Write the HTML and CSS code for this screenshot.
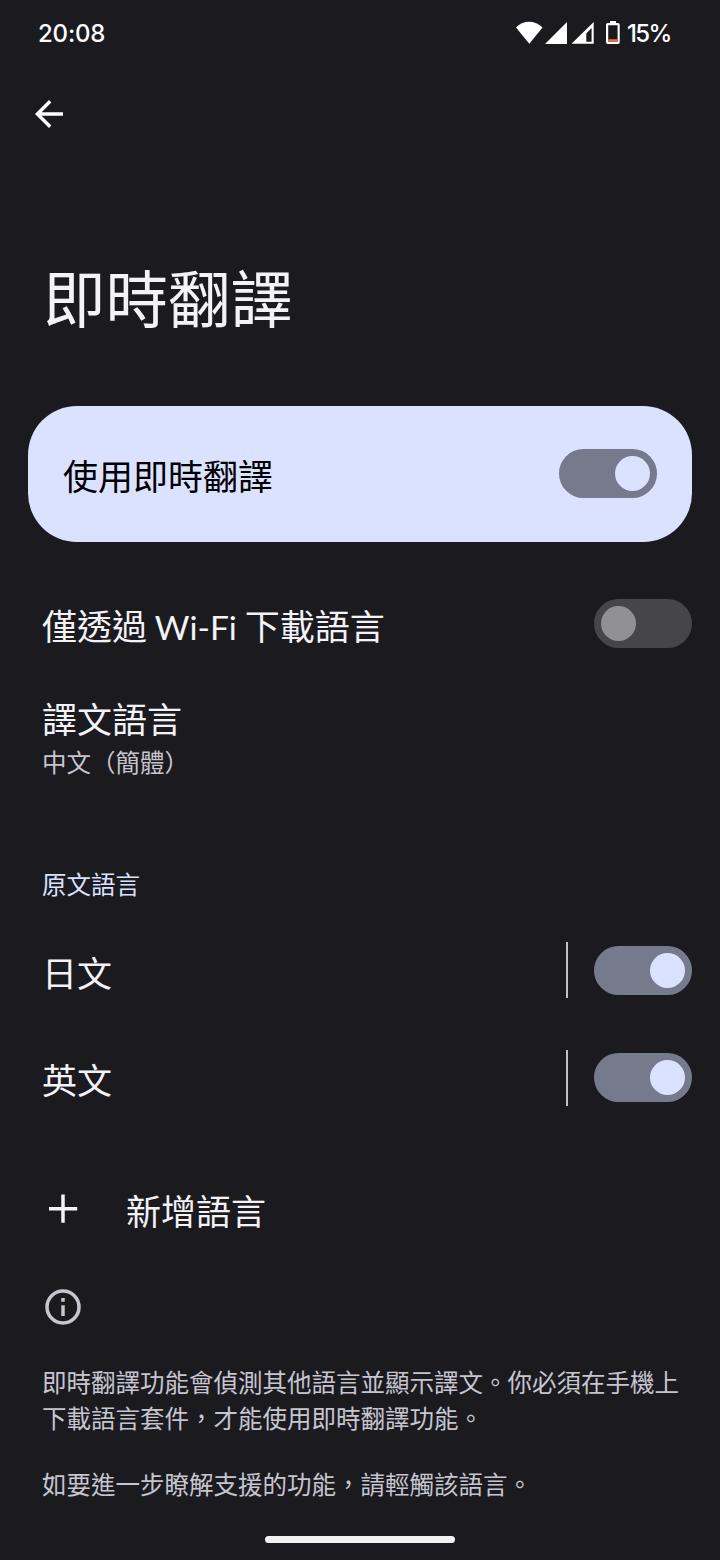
FILE: index.html
```html
<!DOCTYPE html>
<html lang="zh-Hant">
<head>
<meta charset="utf-8">
<title>即時翻譯</title>
<link rel="stylesheet" href="styles.css">
</head>
<body>
<div class="screen">
  <header class="status">
    <span class="clock">20:08</span>
    <div class="status-icons">
      <svg class="signals" width="106" height="28" viewBox="0 0 106 28">
        <path fill="#fff" d="M1 8.500C8 .8 20 .8 27.500 8.500L14.300 24.800Z"/>
        <path fill="#fff" d="M52 3V25H30Z"/>
        <path fill="#fff" fill-rule="evenodd" d="M78.700 3V24.800H56.500ZM76.600 9L71.300 14.500V22.700H76.600Z"/>
        <path fill="#fff" fill-rule="evenodd" d="M95 2h6v2h2q1.700 0 1.700 1.700v17.600q0 1.700-1.700 1.700H92.700q-1.700 0-1.700-1.700V5.700q0-1.700 1.700-1.700h2.300ZM93.200 6.300V22.800H102.600V6.300Z"/>
        <path fill="#f26a3d" d="M93.200 20.200h9.400v2.600h-9.400z"/>
      </svg>
      <span class="percent">15%</span>
    </div>
  </header>
  <nav class="appbar">
    <svg width="30" height="30" viewBox="0 0 30 30" fill="none" stroke="#fff" stroke-width="3.400"><path d="M29 15H4M16.200 2.200L3.400 15L16.200 27.800"/></svg>
  </nav>
  <h1 class="title">即時翻譯</h1>
  <section class="main-switch"><span>使用即時翻譯</span><i class="switch on"></i></section>
  <section class="row wifi"><span>僅透過 <span class="latin">Wi-Fi</span> 下載語言</span><i class="switch"></i></section>
  <section class="target"><div class="label">譯文語言</div><div class="summary">中文（簡體<span class="close">）</span></div></section>
  <h2 class="category">原文語言</h2>
  <section class="row language"><span>日文</span><i class="divider"></i><i class="switch on"></i></section>
  <section class="row language"><span>英文</span><i class="divider"></i><i class="switch on"></i></section>
  <section class="add">
    <svg width="42" height="42" viewBox="0 0 42 42" stroke="#f3f2f7" stroke-width="3.500"><path d="M21 5.500V33.700M7 19.700H35.200"/></svg>
    <span>新增語言</span>
  </section>
  <footer class="info">
    <svg width="42" height="42" viewBox="0 0 42 42" fill="none" stroke="#c6c5d0" stroke-width="3.500"><circle cx="21" cy="21" r="16"/><path d="M21 19.200V30M21 12V15.700"/></svg>
    <p>即時翻譯功能會偵測其他語言並顯示譯文。你必須在手機上<br>下載語言套件，才能使用即時翻譯功能。</p>
    <p>如要進一步瞭解支援的功能，請輕觸該語言。</p>
  </footer>
  <div class="home"></div>
</div>
</body>
</html>
```
FILE: styles.css
```css
* { box-sizing: border-box; }
body { margin: 0; background: #1b1b1f; }
.screen {
  width: 720px; height: 1560px; overflow: hidden;
  display: flex; flex-direction: column;
  background: #1b1b1f; color: #f3f2f7;
  font-family: "Noto Sans CJK TC", sans-serif;
  font-size: 35px; line-height: 50px;
}
.status { height: 66px; padding: 0 49px 0 38px; display: flex; align-items: center; justify-content: space-between; color: #fff; font: 500 24px/28px Inter, sans-serif; }
.clock { letter-spacing: -0.2px; padding-top: 1px; }
.status-icons { display: flex; align-items: center; gap: 6px; }
.percent { width: 44px; padding-top: 1px; letter-spacing: -1.600px; white-space: nowrap; }
.signals, svg { display: block; flex: none; }
.appbar { height: 96px; padding: 33px 0 0 34px; }
.title { margin: 88px 0 0 43px; height: 92px; font-size: 62.500px; line-height: 92px; font-weight: 400; }
.main-switch { margin: 64px 28px 0; height: 136px; padding: 0 35px; border-radius: 49px; background: #dae2ff; color: #000; display: flex; align-items: center; justify-content: space-between; }
.main-switch > span { padding-top: 2px; }
.main-switch .switch { margin-bottom: 1px; }
.switch { flex: none; width: 98px; height: 49px; padding: 7px; border-radius: 25px; background: #46464a; display: flex; }
.switch::before { content: ""; width: 35px; height: 35px; border-radius: 50%; background: #919094; }
.switch.on { justify-content: flex-end; background: #757a8c; }
.switch.on::before { background: #dae2ff; }
.row { padding: 0 28px 0 42px; display: flex; align-items: center; justify-content: space-between; }
.wifi { margin-top: 28px; height: 107px; }
.wifi > span { padding-top: 2px; }
.latin { font-family: Lato, sans-serif; font-size: 33.500px; line-height: 1; }
.target { margin: 16px 0 0 42px; height: 92px; }
.label { height: 51px; }
.summary { font-size: 24.500px; line-height: 36px; color: #c6c5d0; }
.close { margin-left: 0; }
.category { margin: 81px 0 0 42px; height: 36px; font-size: 24.500px; line-height: 36px; font-weight: 400; color: #dae2ff; }
.language { height: 107.500px; }
.language span { padding-top: 3px; }
.category + .language { margin-top: 14.500px; }
.divider { width: 2px; height: 56px; margin: 0 26px 0 auto; background: #c0bfc3; }
.add { height: 100px; margin-top: 28px; padding-left: 42px; display: flex; align-items: center; gap: 42px; }
.info { margin: 26.500px 0 0 42px; height: 230px; font-size: 24.500px; line-height: 36px; color: #c6c5d0; }
.info p { margin: 35.500px 0 0; white-space: nowrap; }
.info p + p { margin-top: 30px; }
.home { width: 190px; height: 7px; border-radius: 4px; margin: auto auto 17px; background: #f2f2f2; }
```
